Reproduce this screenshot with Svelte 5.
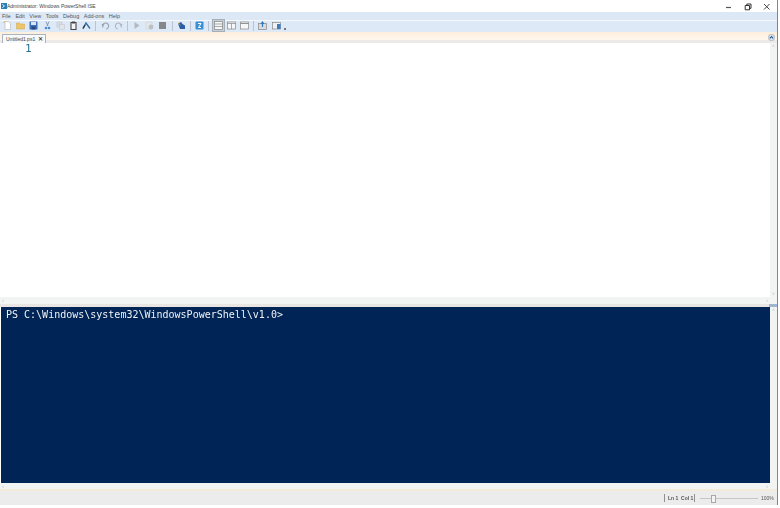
<script>
  const menus = ['File', 'Edit', 'View', 'Tools', 'Debug', 'Add-ons', 'Help'];
</script>

<div class="window">
  <div class="main">
    <header class="title">
      <svg class="logo" width="6" height="6" viewBox="0 0 7 7"><rect width="7" height="7" fill="#2a7fb8"/><path d="M1.5 1.5 4 3.5 1.5 5.5" fill="none" stroke="#fff"/></svg>
      <span class="title-text">Administrator: Windows PowerShell ISE</span>
      <div class="controls">
        <svg width="8" height="8" viewBox="0 0 8 8"><path d="M1 4.5h5" stroke="#555" stroke-width="1.2"/></svg>
        <svg width="8" height="8" viewBox="0 0 8 8"><path d="M1.2 2.5h4.300v4.300H1.200zM2.800 2.500V1h4.200v4.300H5.500" fill="none" stroke="#333"/></svg>
        <svg width="8" height="8" viewBox="0 0 8 8"><path d="M1 1l5.500 5.500M6.500 1 1 6.500" stroke="#444" stroke-width="1"/></svg>
      </div>
    </header>

    <nav class="menu">
      {#each menus as m}<span>{m}</span>{/each}
    </nav>

    <div class="toolbar">
      <svg class="i" viewBox="0 0 9 9"><path d="M2 .5h3.500L7.500 2.500V8.500H2z" fill="#fff" stroke="#bbb" stroke-width=".7"/><path d="M.5 1.500 2 .5" stroke="#e0b030"/></svg>
      <svg class="i" viewBox="0 0 9 9"><path d="M.5 2h3l1 1h4v5H.5z" fill="#eec468" stroke="#d0a648" stroke-width=".5"/></svg>
      <svg class="i" viewBox="0 0 9 9"><rect x=".5" y=".5" width="8" height="8" rx=".5" fill="#3a70b8"/><rect x="2" y="1" width="5" height="3" fill="#dbe6f2"/><rect x="2.500" y="5.500" width="4" height="3" fill="#264a80"/></svg>
      <svg class="i" viewBox="0 0 9 9"><path d="M6 .5 4 5M3 .5 5 5" stroke="#7a8aa6" stroke-width=".8"/><circle cx="3" cy="7" r="1.300" fill="#4a8ccc"/><circle cx="6" cy="7" r="1.300" fill="#4a8ccc"/></svg>
      <svg class="i faded" viewBox="0 0 9 9"><rect x="1" y="1" width="5" height="5" fill="#d5d8dc" stroke="#bbb" stroke-width=".5"/><rect x="3.500" y="3.500" width="5" height="5" fill="#e2e4e8" stroke="#bbb" stroke-width=".5"/></svg>
      <svg class="i" viewBox="0 0 9 9"><path d="M2 1.500h5v7H2z" fill="#f4f4f4" stroke="#444" stroke-width="1.100"/><rect x="3" y=".5" width="3" height="2" fill="#444"/></svg>
      <svg class="i" viewBox="0 0 9 9"><path d="M1 7.500 4 2l4 5.500" fill="none" stroke="#2a6ca8" stroke-width="1.300"/><path d="M1 7.500 3 4" stroke="#333" stroke-width="1.300"/></svg>
      <i class="sep"></i>
      <svg class="i faded" viewBox="0 0 9 9"><path d="M2 6.500A3 3 0 1 1 5 8" fill="none" stroke="#8a8f98" stroke-width="1.100"/><path d="M.5 3h3L2 5.500z" fill="#8a8f98"/></svg>
      <svg class="i faded" viewBox="0 0 9 9"><path d="M7 6.500A3 3 0 1 0 4 8" fill="none" stroke="#a5a9b0" stroke-width="1.100"/><path d="M8.500 3h-3L7 5.500z" fill="#a5a9b0"/></svg>
      <i class="sep"></i>
      <svg class="i faded" viewBox="0 0 9 9"><path d="M2.500 1 7.500 4.500 2.500 8z" fill="#a9adb3"/></svg>
      <svg class="i faded" viewBox="0 0 9 9"><rect x="1" y="1" width="6" height="7" fill="#e6e7e9" stroke="#c3c5c8" stroke-width=".5"/><circle cx="6" cy="6" r="2.400" fill="#b4b6b8"/></svg>
      <svg class="i" viewBox="0 0 9 9"><rect x="1" y="1" width="7" height="7" fill="#85878a"/></svg>
      <i class="sep"></i>
      <svg class="i" viewBox="0 0 9 9"><path d="M1 2.500 4 1l1.500 2L8 4.500V8H3z" fill="#2c5ea8"/><path d="M1 2 3.500 4" stroke="#e7a22c" stroke-width=".8"/></svg>
      <i class="sep"></i>
      <svg class="i" viewBox="0 0 9 9"><rect x=".5" y=".5" width="8" height="8" rx="1" fill="#3a8fd2"/><path d="M3 2.500h3L3.500 6.500H6" fill="none" stroke="#fff" stroke-width="1"/></svg>
      <i class="sep"></i>
      <span class="pressed"><svg class="i" viewBox="0 0 9 9"><rect x=".5" y=".5" width="8" height="8" fill="#f6f7f8" stroke="#888" stroke-width=".7"/><path d="M.5 3h8M.5 5.500h8" stroke="#888" stroke-width=".7"/></svg></span>
      <svg class="i" viewBox="0 0 9 9"><rect x=".5" y="1" width="8" height="7" fill="#f6f7f8" stroke="#888" stroke-width=".7"/><path d="M.5 2.500h8M4.500 2.500v5.500" stroke="#888" stroke-width=".7"/></svg>
      <svg class="i" viewBox="0 0 9 9"><rect x=".5" y="1" width="8" height="7" fill="#f6f7f8" stroke="#888" stroke-width=".7"/><path d="M.5 2.500h8" stroke="#888" stroke-width=".9"/></svg>
      <i class="sep"></i>
      <svg class="i" viewBox="0 0 9 9"><rect x=".5" y="2.500" width="8" height="6" fill="#d8dade" stroke="#888" stroke-width=".7"/><path d="M4.500 1v5M3 3l1.500-2L6 3" fill="none" stroke="#2f78bd" stroke-width="1.100"/></svg>
      <svg class="i" viewBox="0 0 9 9"><rect x=".5" y="1.500" width="8" height="6.500" fill="#eef0f3" stroke="#888" stroke-width=".7"/><rect x="5" y="3" width="3.500" height="5" fill="#3a7cbe"/></svg>
      <span class="more"></span>
    </div>

    <div class="tabstrip">
      <div class="tab"><span>Untitled1.ps1</span><b>✕</b></div>
      <span class="collapse"><svg width="7" height="7" viewBox="0 0 7 7"><circle cx="3.500" cy="3.500" r="3.200" fill="#dfe3e8" stroke="#8c949c" stroke-width=".5"/><path d="M1.800 4.300 3.500 2.600 5.200 4.300" fill="none" stroke="#1d5fa8" stroke-width="1.100"/></svg></span>
    </div>

    <section class="editor">
      <div class="editor-body">
        <div class="gutter">1</div>
        <div class="vscroll light"><span class="arrow">˄</span><span class="arrow">˅</span></div>
      </div>
      <div class="hscroll"><span class="arrow">‹</span><span class="arrow">›</span></div>
    </section>

    <div class="splitter"><span class="grip"></span></div>

    <section class="console">
      <pre class="prompt">PS C:\Windows\system32\WindowsPowerShell\v1.0&gt;</pre>
      <div class="vscroll"><span class="arrow">˄</span></div>
    </section>

    <div class="hscroll bottom"><span class="arrow">‹</span><span class="arrow">›</span></div>
    <div class="rule"></div>

    <footer class="status">
      <i class="vbar"></i>
      <span class="pos">Ln 1&nbsp; Col 1</span>
      <i class="vbar"></i>
      <div class="slider"><span class="knob"></span></div>
      <span class="zoom">100%</span>
    </footer>
  </div>
  <div class="edge"></div>
</div>

<style>
  :global(body) { margin: 0; background: #fff; }
  .window {
    width: 780px; height: 505px; display: flex;
    font-family: "Liberation Sans", Arial, sans-serif; color: #333; overflow: hidden;
    filter: blur(.35px);
  }
  .main { width: 777px; display: flex; flex-direction: column; }
  .edge { width: 1px; background: #7c8796; }

  .title { height: 11px; display: flex; align-items: center; padding: 1px 0 0 1px; background: #fff; }
  .title-text { font-size: 5px; color: #444; }
  .controls { margin-left: auto; display: flex; gap: 11px; padding-right: 6px; padding-top: 1px; align-items: center; }

  .menu {
    height: 7px; padding: 1px 0 0 2px; display: flex; gap: 4.500px; align-items: center;
    background: #dce8f6; font-size: 5.500px; color: #555;
  }
  .toolbar {
    height: 12px; display: flex; align-items: center; gap: 4.200px; padding-left: 3px;
    background: linear-gradient(#f5f8fc 0 1px, #dde9f7 1px);
  }
  .i { width: 9px; height: 9px; flex: none; }
  .faded { opacity: .8; }
  .sep { width: 1px; height: 10px; background: #b9c4d0; flex: none; }
  .pressed { display: flex; padding: 1px; background: #c8ced6; border: 1px solid #a6aeb7; margin: 0 -2px; }
  .more { width: 2px; height: 2px; background: #777; margin: 7px 0 0 -1px; }

  .tabstrip {
    height: 11px; display: flex; align-items: flex-end; padding-left: 2px;
    background: linear-gradient(#fdeedd, #fff6ec 70%, #eceae8 70%);
    position: relative;
  }
  .tab {
    width: 44px; height: 9px; display: flex; align-items: center; gap: 3px; padding-left: 3px;
    box-sizing: border-box; background: #f7f9fb; border: 1px solid #a9b4c0; border-bottom: 0;
    font-size: 5px; color: #444; border-radius: 1px 1px 0 0;
  }
  .tab b { font-size: 5.500px; font-weight: bold; color: #444; }
  .collapse { position: absolute; right: 2px; top: 2px; display: flex; }

  .editor { height: 262px; display: flex; flex-direction: column; background: #fff; }
  .editor-body { flex: 1; display: flex; }
  .gutter {
    flex: 1; padding: 0 0 0 25px; font-family: "DejaVu Sans Mono", "Liberation Mono", monospace;
    font-size: 11px; line-height: 11px; color: #2a6f92;
  }
  .vscroll {
    width: 7px; display: flex; flex-direction: column; justify-content: space-between; align-items: center;
    background: #f2f3f3; color: #c3c3c3; font-size: 5px; line-height: 6px;
  }
  .hscroll {
    height: 7px; display: flex; justify-content: space-between; align-items: center;
    padding: 0 9px 0 2px; background: #f2f3f3; color: #c3c3c3; font-size: 6px;
  }
  .splitter { height: 3px; background: #e8e5e2; position: relative; }
  .grip { position: absolute; right: 0; top: 0; width: 8px; height: 3px; background: #9fb6d0; }

  .console { height: 177px; display: flex; background: #012456; margin-left: 1px; }
  .prompt {
    flex: 1; margin: 0; padding: 2px 0 0 5px; color: #f0f3f6;
    font-family: "DejaVu Sans Mono", "Liberation Mono", monospace; font-size: 10px; line-height: 12px;
  }

  .bottom { height: 6px; }
  .rule { height: 2px; background: #f3ead9; }

  .status {
    height: 14px; display: flex; align-items: center; background: #ececec;
    font-size: 5px; color: #555; padding-left: 664px;
  }
  .vbar { width: 1px; height: 8px; background: #8f8f8f; flex: none; }
  .pos { margin: 0 3px; font-weight: bold; white-space: nowrap; width: 23px; }
  .slider { width: 58px; height: 1px; background: #c6c6c6; margin-left: 5px; position: relative; }
  .knob {
    position: absolute; left: 11px; top: -3px; width: 3px; height: 6px;
    background: #f4f4f4; border: 1px solid #a8a8a8;
  }
  .zoom { margin-left: 3px; white-space: nowrap; }
</style>
